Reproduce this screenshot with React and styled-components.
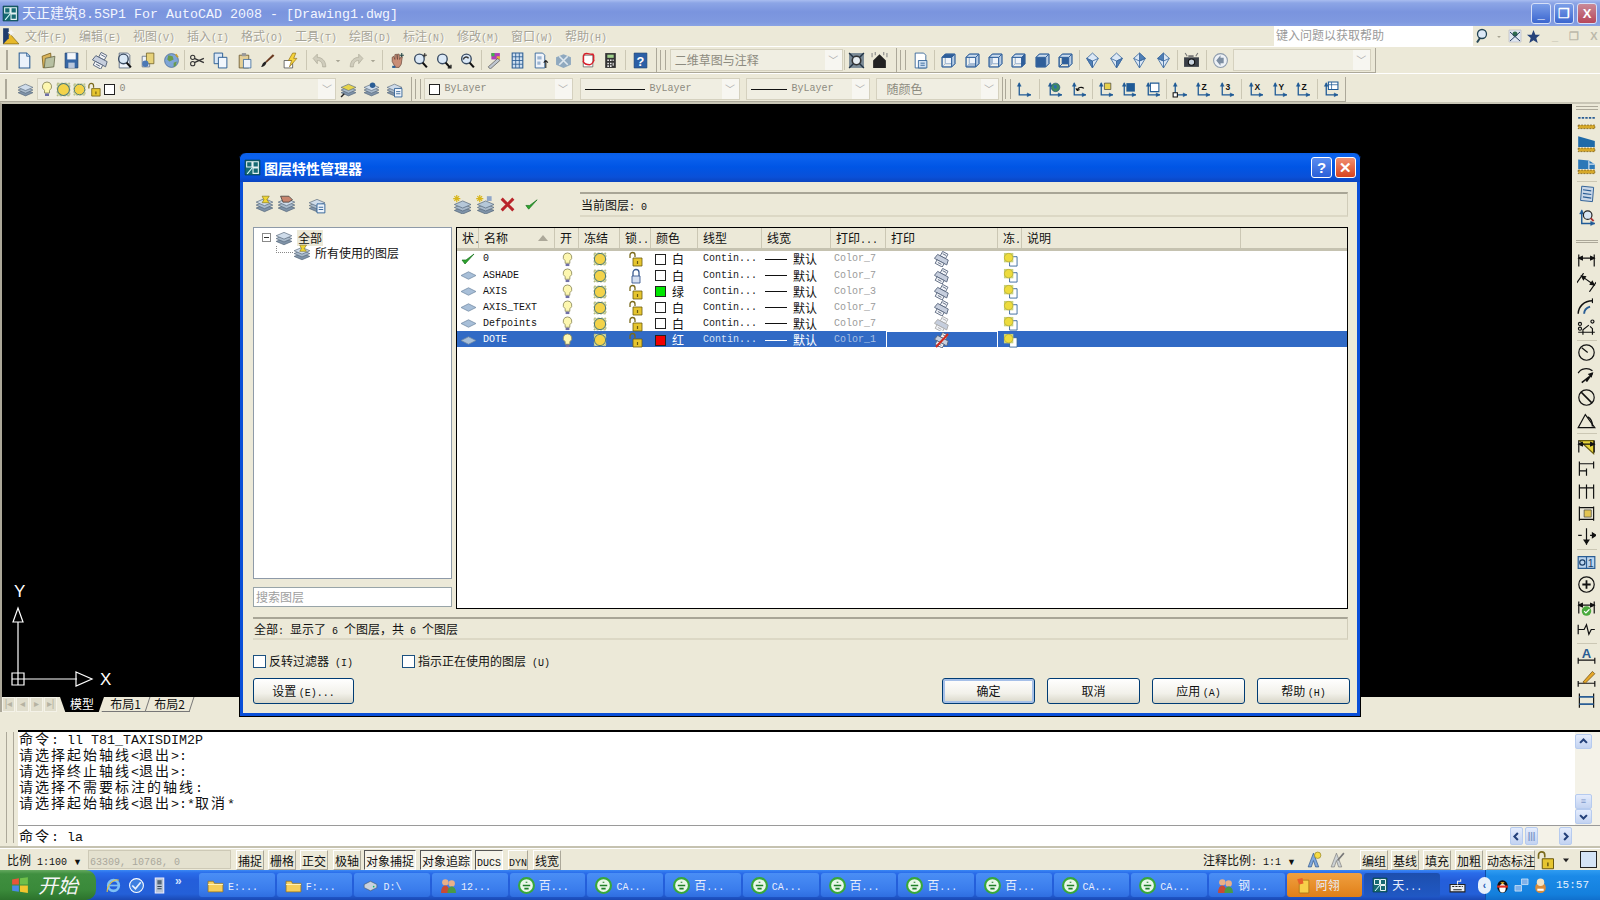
import React from 'react';
import styled, { createGlobalStyle } from 'styled-components';

const cjk = '"Noto Sans CJK SC", "Liberation Sans", sans-serif';
const mono = '"Liberation Mono", "Noto Sans CJK SC", monospace';
const face = '#ece9d8';

const Global = createGlobalStyle`
  html, body { margin: 0; padding: 0; width: 1600px; height: 900px; overflow: hidden; background: ${face}; }
  * { box-sizing: border-box; }
  body { font-family: ${cjk}; font-size: 12px; line-height: 16px; color: #111; }
`;

// ---- little drawings ----
const stack = (top = '#cfdcea') => (
  <>
    <path d="M1 11l7-3 7 3-7 3z" fill="#7f93a8" stroke="#55677a" strokeWidth=".6" />
    <path d="M1 8.5l7-3 7 3-7 3z" fill="#a9bacb" stroke="#55677a" strokeWidth=".6" />
    <path d="M1 6l7-3 7 3-7 3z" fill={top} stroke="#55677a" strokeWidth=".6" />
  </>
);
const cube = (dark) => {
  const fill = (k) => (dark === k ? '#2f5f9a' : 'none');
  return (
    <g stroke="#2f5f9a" strokeWidth=".9" strokeLinejoin="round">
      <path d="M5 2h9v9H5z" fill={dark === 'back' ? '#2f5f9a' : '#e6eef7'} />
      <path d="M2 14l3-3h9l-3 3z" fill={fill('bottom')} />
      <path d="M2 5l3-3v9l-3 3z" fill={fill('left')} />
      <path d="M2 5h9v9H2z" fill={dark === 'front' ? '#2f5f9a' : dark === 'back' ? 'none' : '#f5f8fc'} fillOpacity={dark === 'front' ? 1 : 0.6} />
      <path d="M2 5l3-3h9l-3 3z" fill={dark === 'top' ? '#2f5f9a' : '#cbdcee'} />
      <path d="M11 5l3-3v9l-3 3z" fill={dark === 'right' ? '#2f5f9a' : '#b8cde4'} />
    </g>
  );
};
const iso = (d) => (
  <g stroke="#3d6a9f" strokeWidth=".8" strokeLinejoin="round">
    <path d="M8 1l5.5 5L8 15 2.5 6z" fill="#dce8f5" />
    <path d={d} fill="#4f7fb6" />
    <path d="M2.5 6L8 8.5 13.5 6M8 8.5V15" fill="none" />
  </g>
);
const axes = (
  <g stroke="#1f5a96" strokeWidth="1.2" fill="none">
    <path d="M4 2v11h11" />
    <path d="M2.2 5L4 1.5 5.8 5zM11.5 11.2l3.5 1.8-3.5 1.8z" fill="#1f5a96" strokeWidth=".4" />
  </g>
);
const axesText = (t) => (
  <>
    {axes}
    <text x="7" y="8" fontSize="8" fontWeight="700" fontFamily="Liberation Sans" fill="#111">{t}</text>
  </>
);
const dimBar = (
  <g stroke="#111" strokeWidth="1" fill="none">
    <path d="M1.5 3v10M14.5 3v10M1.5 6h13" />
    <path d="M1.5 6l3-1.5v3zM14.5 6l-3-1.5v3z" fill="#111" />
  </g>
);
const ruler = <path d="M1 11h14v3H1z" fill="#d7a92a" stroke="#6b5210" strokeWidth=".6" strokeDasharray="1.5 1" />;
const printer = (c = '#55637a') => (
  <g stroke={c} strokeWidth=".8" transform="rotate(28 8 8)">
    <path d="M5 1h6v5H5z" fill="#f2f4f8" />
    <path d="M2 6h12l1 5H1z" fill="#c6cedd" />
    <path d="M4 11h8v4H4z" fill="#f2f4f8" />
    <path d="M6 3h4M6 13h4" fill="none" />
  </g>
);
const lockOpen = (
  <>
    <path d="M2 7V4a2.5 2.5 0 0 1 5 0v2" fill="none" stroke="#7b6a1c" strokeWidth="1.3" />
    <path d="M5 7h9v8H5z" fill="#e6c52f" stroke="#6b5a10" strokeWidth=".8" />
    <path d="M9.5 10v3" stroke="#6b5a10" strokeWidth="1.2" />
  </>
);
const bulb = (
  <>
    <path d="M8 1a4.5 4.5 0 0 0-2.5 8.3V12h5V9.3A4.5 4.5 0 0 0 8 1z" fill="#fdf7b0" stroke="#8c8a5c" strokeWidth=".9" />
    <path d="M6 12.5h4v2.5H6z" fill="#6f6fa6" />
  </>
);
const sun = (
  <>
    <path d="M2 2h12v12H2z" fill="#cfd6a0" stroke="#9aa06a" strokeWidth=".6" strokeDasharray="2 1.5" />
    <circle cx="8" cy="8" r="5.6" fill="#f3d34a" stroke="#4d7a7a" strokeWidth="1" />
  </>
);
const folder = (
  <>
    <path d="M1 4h5l1 2h8v8H1z" fill="#f5cf5c" stroke="#8f7020" strokeWidth=".7" />
    <path d="M1 7h14" stroke="#fff2b8" strokeWidth="1" />
  </>
);
const lens = (extra) => (
  <>
    <circle cx="7" cy="6.5" r="4.5" fill="#dbe9f7" stroke="#3a4c63" strokeWidth="1.3" />
    <path d="M10 10l4 4.5" stroke="#111" strokeWidth="2" />
    {extra}
  </>
);

const drawings = {
  folder,
  new: <><path d="M3 1h7l3 3v11H3z" fill="#eaf2fb" stroke="#2a5d94" /><path d="M10 1v3h3" fill="#bcd3ea" stroke="#2a5d94" strokeWidth=".7" /></>,
  open: <><path d="M2 4l8-3 1 10-8 4z" fill="#d9b45c" stroke="#6d5314" strokeWidth=".7" /><path d="M5 6l9-2-1 10-9 1z" fill="#b7c0a2" stroke="#5d5f40" strokeWidth=".7" /></>,
  save: <><path d="M2 1h12v14H2z" fill="#3566a5" stroke="#1e3f70" strokeWidth=".7" /><path d="M4 1h8v6H4z" fill="#f3f6fb" /><path d="M5 10h6v5H5z" fill="#b9c7dc" /></>,
  print: printer(),
  preview: <><path d="M3 1h8l2 2v12H3z" fill="#eef3fa" stroke="#55637a" strokeWidth=".8" />{lens(null)}</>,
  publish: <><path d="M3 4h7v10H3z" fill="#eef3fa" stroke="#55637a" strokeWidth=".7" /><path d="M7 1h7v10H7z" fill="#e7d27a" stroke="#6a5a20" strokeWidth=".7" /><circle cx="6" cy="11" r="3" fill="#4c78b5" /></>,
  globe: <><circle cx="8" cy="8" r="6.5" fill="#7fa5d6" stroke="#4a6b96" strokeWidth=".7" /><path d="M5 3l4 1 1 3-4 2-2-2zM10 10l3-1-1 4-2 1z" fill="#6a9b4e" /><path d="M12 2l2 3" stroke="#c8a030" strokeWidth="1.6" /></>,
  cut: <g stroke="#333" fill="none"><circle cx="3.5" cy="5" r="2" /><circle cx="3.5" cy="11" r="2" /><path d="M5 6l9 4M5 10l9-4" strokeWidth="1.2" /></g>,
  copy: <g stroke="#2a5d94" strokeWidth=".9"><path d="M2 1h8v10H2z" fill="#dbe8f6" /><path d="M6 5h8v10H6z" fill="#f2f7fc" /></g>,
  paste: <><path d="M3 3h9v12H3z" fill="#e5cf96" stroke="#6a5a30" strokeWidth=".8" /><path d="M5.5 1h4v3h-4z" fill="#999" /><path d="M7 7h7v8H7z" fill="#eef3fa" stroke="#2a5d94" strokeWidth=".7" /></>,
  brush: <><path d="M13 2l1.5 1.5L7 10 6 9z" fill="#6a3a20" /><path d="M6 9l1 1c-1 3-3 4-5 4 1-1 1-4 4-5z" fill="#222" /></>,
  match: <><path d="M2 8h8v7H2z" fill="#fff" stroke="#444" strokeWidth=".7" /><path d="M10 1L6 8h3l-2 6 7-8h-3l2-5z" fill="#f5d33d" stroke="#8a6a10" strokeWidth=".6" /></>,
  undo: <path d="M13 14C13 8 9 5 5 5V2L1 6l4 5V8c3 0 5 2 5 6z" fill="#cfccbc" stroke="#a8a594" strokeWidth=".6" />,
  redo: <path d="M3 14C3 8 7 5 11 5V2l4 4-4 5V8c-3 0-5 2-5 6z" fill="#cfccbc" stroke="#a8a594" strokeWidth=".6" />,
  drop: <path d="M5 8h6l-3 3z" fill="#a8a594" />,
  dropDark: <path d="M4 6h8l-4 5z" fill="#222" />,
  pan: <><path d="M3 9V5l1.5-1 1 3V2.500l1.500-.5 1 5V2l1.500 0 .5 5 1.500-3 1 .5-1 7-2 3H6z" fill="#c98d76" stroke="#5f3c2f" strokeWidth=".6" /><path d="M12 1v4M10 3h4" stroke="#244" strokeWidth="1" /><path d="M3 13h3v2H3z" fill="#2a5d94" /></>,
  zoom: lens(<path d="M12 1v4M10 3h4" stroke="#222" strokeWidth=".9" />),
  zoomwin: lens(<path d="M12 15h3v-3" fill="none" stroke="#111" strokeWidth="1.2" />),
  zoomprev: lens(<path d="M4 7c1-3 4-3 5-1" fill="none" stroke="#333" strokeWidth="1.400" />),
  palette: <><path d="M6 1h8v6H6z" fill="#b03cb8" /><path d="M6 1h3v3H6z" fill="#3fb54a" /><path d="M11 4h3v3h-3z" fill="#e2b53a" /><path d="M3 14L12 6l2 2-9 8z" fill="#bfc6d0" stroke="#444" strokeWidth=".6" /></>,
  table: <g fill="#cfdff0" stroke="#2a5d94"><path d="M3 1h10v14H3z" /><path d="M6.300 1v14M9.700 1v14M3 4.500h10M3 8h10M3 11.500h10" fill="none" strokeWidth=".8" /></g>,
  sheet: <><path d="M3 1h7l2 2v12H3z" fill="#f0f4fa" stroke="#2a5d94" strokeWidth=".8" /><path d="M5 4h4v3H5zM5 9h3v3H5z" fill="#9db6d3" /><path d="M13 15V8M11 10l2-2 2 2" fill="none" stroke="#222" /></>,
  tool4: <><path d="M1 5l7-3 7 3v7l-7 3-7-3z" fill="#8fa9bf" /><path d="M4 4l8 8M12 4L4 12" stroke="#dfe8ef" strokeWidth="1.500" /></>,
  markup: <><path d="M4 3h9v11H4z" fill="#fff" stroke="#555" strokeWidth=".7" /><path d="M5 2c3-2 5 1 8 0 2 2 0 4 1 6-1 2-2 4-4 4-3 0-5-1-6-3 1-2-1-4 1-7z" fill="none" stroke="#d81f2a" strokeWidth="1.400" /></>,
  calc: <><path d="M3 1h10v14H3z" fill="#333" /><path d="M5 2.500h6v3H5z" fill="#9fd08a" /><path d="M5 7h1.500v1.500H5zM7.500 7H9v1.500H7.500zM10 7h1v1.500h-1zM5 10h1.500v1.500H5zM7.500 10H9v1.500H7.500zM10 10h1v3h-1zM5 12.500h1.500V14H5zM7.500 12.500H9V14H7.500z" fill="#eee" /></>,
  help: <><path d="M2 1h12v14H2z" fill="#2b5fa6" stroke="#123a70" strokeWidth=".6" /><text x="8" y="13" fontSize="12" fontWeight="700" textAnchor="middle" fontFamily="Liberation Sans" fill="#fff">?</text></>,
  gear: <><path d="M1 1h14v14H1z" fill="#7a8a96" /><circle cx="8" cy="8" r="4" fill="#e6edf2" stroke="#333" strokeWidth="1.500" /><path d="M1 1l4 4M15 1l-4 4M1 15l4-4M15 15l-4-4" stroke="#234" strokeWidth="1.300" /></>,
  house: <><path d="M2 8l6-6 6 6v7H2z" fill="#222" /><path d="M1 1v4M4 0v3M12 0v3M15 1v4" stroke="#888" strokeWidth="1" /></>,
  sheetset: <><path d="M3 1h8l2 2v12H3z" fill="#fff" stroke="#2a5d94" strokeWidth=".8" /><path d="M6 8h8v7H6z" fill="#cfe0f2" stroke="#2a5d94" strokeWidth=".8" /><path d="M8 10.500h4M8 12.500h4" stroke="#2a5d94" strokeWidth=".8" /></>,
  cTop: cube('top'), cBottom: cube('bottom'), cLeft: cube('left'), cRight: cube('right'), cFront: cube('front'), cBack: cube('back'),
  iso1: iso('M2.500 6L8 8.500V15z'), iso2: iso('M13.500 6L8 8.500V15z'), iso3: iso('M8 1l5.500 5L8 8.500z'), iso4: iso('M8 1L2.500 6 8 8.500z'),
  camera: <><path d="M1 5h14v9H1z" fill="#3a3f47" /><path d="M5 3h5v2H5z" fill="#777" /><circle cx="8" cy="9.500" r="3" fill="#c8d3de" stroke="#111" /><path d="M2 1l2 3M14 1l-2 3" stroke="#777" /></>,
  back: <><circle cx="8" cy="8" r="6.500" fill="#edf1f6" stroke="#8d9bab" /><path d="M11 5.500H8V3L4 8l4 5v-2.500h3z" fill="#7d8ea2" /></>,
  layers: stack(),
  layerPrev: <>{stack('#e6d44a')}<path d="M1 15l3-3" stroke="#222" strokeWidth="1.300" /></>,
  layerSet: <>{stack('#cfdcea')}<circle cx="9" cy="4" r="2.600" fill="#2a5d94" /></>,
  layerDoc: <>{stack('#cfdcea')}<path d="M8 7h7v8H8z" fill="#eef4fb" stroke="#2a5d94" strokeWidth=".8" /><path d="M9.500 10h4M9.500 12h4" stroke="#2a5d94" strokeWidth=".8" /></>,
  layerFilter: <>{stack('#cfdcea')}<path d="M6 1h6l-2 3 2 2.500H6l1.500-2.500z" fill="#f0d633" stroke="#7a6a10" strokeWidth=".5" /></>,
  layerHand: <>{stack('#cfdcea')}<path d="M3 1h7l3 3-3 2H5z" fill="#c9866e" stroke="#333" strokeWidth=".6" /></>,
  layerNew: <><g transform="translate(1 2)">{stack('#b5c7d8')}</g><path d="M4 0v6M1 3h6M2 1l4 4M6 1L2 5" stroke="#d8b61c" strokeWidth="1" /></>,
  layerNew2: <><g transform="translate(1 2)">{stack('#b5c7d8')}</g><path d="M4 0v6M1 3h6M2 1l4 4M6 1L2 5" stroke="#d8b61c" strokeWidth="1" /><path d="M10 1h4v4h-4z" fill="#8fa5c8" /></>,
  del: <path d="M2.500 2.500l11 11M13.500 2.500l-11 11" stroke="#b9242a" strokeWidth="2.800" />,
  ok: <path d="M2 9l3 4 9-10-8 6z" fill="#2ea52e" stroke="#14701a" strokeWidth=".7" />,
  plane: <><path d="M1 8l7-3.500L15 8l-7 3.500z" fill="#a8bfd8" stroke="#7088a2" strokeWidth=".7" /></>,
  bulb, sun, lockOpen,
  lockShut: <><path d="M5 8V4.500a3 3 0 0 1 6 0V8" fill="none" stroke="#3a5a90" strokeWidth="1.300" /><path d="M4 8h8v7H4z" fill="#d5dff0" stroke="#3a5a90" strokeWidth=".9" /></>,
  printer: printer(),
  printerOff: printer('#a9a9a9'),
  printerNo: <>{printer()}<path d="M2 15L14 2" stroke="#d22b1e" strokeWidth="2" /></>,
  vpFreeze: <><path d="M7 5h8v10H7z" fill="#fff" stroke="#2a5d94" strokeWidth=".9" /><path d="M1 1h10v10H1z" fill="#c9d27a" /><circle cx="6" cy="6" r="4.500" fill="#eddc3e" stroke="#b5a62a" strokeWidth=".7" /></>,
  ucs: axes,
  ucsWorld: <>{axes}<circle cx="9" cy="6" r="4" fill="#3f8a5f" stroke="#1d4c7c" strokeWidth=".6" /><path d="M7 4h3v3H8z" fill="#2a6bb0" /></>,
  ucsPrev: <>{axes}<path d="M7 9c0-3 4-4 6-2M7 9l-1.500-2M7 9l2-1" fill="none" stroke="#111" strokeWidth="1.100" /></>,
  ucsFace: <>{axes}<path d="M7 2h6v6H7z" fill="#e7d14a" stroke="#333" strokeWidth=".6" /></>,
  ucsObj: <>{axes}<path d="M6 2h8v8H6z" fill="#1f5a96" /></>,
  ucsView: <>{axes}<path d="M6 2h8v8H6z" fill="#fff" stroke="#1f5a96" /></>,
  ucsOrigin: <>{axes}<path d="M2 11h4v4H2z" fill="#fff" stroke="#111" /></>,
  ucsZ: axesText('Z'), ucs3: axesText('3'), ucsRx: axesText('X'), ucsRy: axesText('Y'), ucsRz: axesText('Z'),
  ucsNamed: <>{axes}<path d="M6 1h9v7H6z" fill="#fff" stroke="#1f5a96" /><path d="M6 3.500h9M9 1v7" stroke="#1f5a96" strokeWidth=".7" /></>,
  qd1: <><path d="M1 5h14" stroke="#2a5d94" strokeWidth="1.500" strokeDasharray="2 1" />{ruler}</>,
  qd2: <><path d="M1 1l14 4v5H1z" fill="#1f6aa8" />{ruler}</>,
  qd3: <><path d="M1 2l9 1 5 3v4H1z" fill="#2c78b8" /><path d="M10 3v7M10 6h5" stroke="#cfe2f2" />{ruler}</>,
  notes: <><path d="M4 1l10 1-1 12-10-1z" fill="#c9d7e8" stroke="#2a5d94" strokeWidth=".8" /><path d="M5 4l7 1M5 7l7 1M5 10l7 1" stroke="#2a5d94" /></>,
  ucsLens: <>{axes}<circle cx="9" cy="6" r="3.600" fill="#d8e6f4" stroke="#222" /><path d="M11.500 8.500l2.500 2.500" stroke="#a33" strokeWidth="1.600" /></>,
  dLinear: dimBar,
  dAligned: <g transform="rotate(35 8 8)">{dimBar}</g>,
  dArc: <g stroke="#111" fill="none"><path d="M1 15c0-6 5-11 12-11" strokeWidth="1.200" /><path d="M6 15c0-3 2-5 5-6" stroke="#2a5d94" strokeWidth="1.600" /><path d="M13 2v4" /></g>,
  dOrd: <g stroke="#111" fill="none"><path d="M5 14v-4l5-4M13 14v-5l-2-2M1 12h14" /><circle cx="2.500" cy="5" r="1.300" /><circle cx="13" cy="3" r="1.300" /><circle cx="2.500" cy="9" r="1.300" /></g>,
  dRadius: <g stroke="#111" fill="none"><circle cx="8" cy="8" r="6.500" /><path d="M4 4l5 4" /></g>,
  dJog: <g stroke="#111" fill="none"><path d="M1 6c2-4 8-5 12-2" /><path d="M4 14l5-4-1 3 5-7" strokeWidth="1.300" /><path d="M13 6l-3 1 2 2z" fill="#111" /></g>,
  dDia: <g stroke="#111" fill="none"><circle cx="8" cy="8" r="6.500" /><path d="M3.500 3.500l9 9" strokeWidth="1.300" /></g>,
  dAngle: <g stroke="#111" fill="none"><path d="M1 14h14L7 3z" /><path d="M9 5c2 1 4 4 4 8" strokeWidth="1.200" /></g>,
  dQuick: <><path d="M2 3h12v11z" fill="#e8d43a" stroke="#6a5e10" />{dimBar}</>,
  dBase: <g stroke="#111" fill="none"><path d="M2 2v12M14 2v6M8 8v6M2 4h12M2 10h6" /></g>,
  dCont: <g stroke="#111" fill="none"><path d="M2 2v12M8 2v12M14 2v12M2 5h12" /></g>,
  dSpace: <><g stroke="#111" fill="none"><path d="M2 2v12M14 2v12M2 3h12M2 13h12" /></g><path d="M6 5h6v6H6z" fill="#e3c552" stroke="#444" strokeWidth=".6" /></>,
  dBreak: <g stroke="#111" fill="none"><path d="M8 1v14M1 7h3M11 7h4" /><path d="M8 14l-2-3h4zM13 5l3 2-3 2z" fill="#111" /></g>,
  dTol: <><path d="M1 3h14v10H1z" fill="#bcd5ee" stroke="#2a5d94" /><path d="M8 3v10" stroke="#2a5d94" /><circle cx="4.500" cy="8" r="2.200" fill="none" stroke="#1c3f68" /><text x="11.500" y="11.500" fontSize="9" textAnchor="middle" fontFamily="Liberation Sans" fill="#1c3f68">1</text></>,
  dCenter: <g stroke="#111" fill="none"><circle cx="8" cy="8" r="6.500" /><path d="M8 4.500v7M4.500 8h7" strokeWidth="1.500" /></g>,
  dInspect: <>{dimBar}<circle cx="8" cy="11" r="4" fill="#4aaa3c" /><path d="M6 11l1.500 1.500L10.500 9.500" stroke="#fff" fill="none" /></>,
  dZig: <g stroke="#111" fill="none"><path d="M1 4v8M1 8h5l2-4 2 8 2-4h3" /></g>,
  dText: <><text x="8" y="9.500" fontSize="11" fontWeight="700" textAnchor="middle" fontFamily="Liberation Sans" fill="#2a5d94">A</text><path d="M1 11h14M1 9v5M15 9v5" stroke="#111" /></>,
  dEdit: <><path d="M1 12h14M1 10v5M15 10v5" stroke="#111" /><path d="M5 11L13 2l2 2-8 8z" fill="#e6a82a" stroke="#6b4a10" strokeWidth=".6" /></>,
  dUpdate: <g stroke="#111" fill="none"><path d="M2 2v12M14 2v12" /><path d="M2 5h12M2 11h12" stroke="#2a5d94" strokeWidth="1.500" /></g>,
  ieE: <><circle cx="8" cy="8" r="5" fill="none" stroke="#7fc0f5" strokeWidth="2.500" /><path d="M3 8h10" stroke="#7fc0f5" strokeWidth="1.600" /><path d="M13 3C9 1 2 7 2 14" fill="none" stroke="#e9c441" /></>,
  desktop: <><circle cx="8" cy="8" r="6.500" fill="#3d7fe0" stroke="#fff" /><path d="M4 8l3 3 5-6" fill="none" stroke="#e8f1ff" strokeWidth="1.600" /></>,
  device: <><path d="M4 1h8v14H4z" fill="#b8c4d4" stroke="#eef" /><path d="M6 3h4v4H6z" fill="#567" /><path d="M6 9h4M6 11h4" stroke="#345" /></>,
  ball: <><circle cx="8" cy="8" r="7" fill="#eaf7e9" stroke="#38a83a" strokeWidth="2" /><path d="M4.500 8h7M8 4.500v1M6 11h4" stroke="#1f7f28" strokeWidth="1.600" /></>,
  drive: <><path d="M2 7l6-3 6 3v3l-6 3-6-3z" fill="#c9d2de" stroke="#44566a" strokeWidth=".6" /><circle cx="11" cy="9" r=".8" fill="#1b6" /></>,
  people: <><circle cx="5" cy="5" r="3" fill="#e9b089" /><path d="M1 15c0-5 2-7 4-7s4 2 4 7z" fill="#c94a35" /><circle cx="11" cy="6" r="3" fill="#e9b089" /><path d="M7 15c0-4 2-6 4-6s4 2 4 6z" fill="#4a9a45" /></>,
  note: <><path d="M4 3h9v12H4z" fill="#f8cf4a" stroke="#9a6a10" strokeWidth=".6" /><path d="M2 2l5-1 1 5-4 1z" fill="#e85f2a" /></>,
  keyboard: <><path d="M1 7h14v7H1z" fill="#eef1f5" stroke="#222" /><path d="M3 9h2M6 9h2M9 9h2M12 9h1M4 12h8" stroke="#222" /><path d="M8 7V4h3V2" fill="none" stroke="#eee" /></>,
  tux: <><ellipse cx="8" cy="9" rx="5" ry="6" fill="#111" /><ellipse cx="8" cy="10.500" rx="3" ry="4" fill="#fff" /><path d="M3 8h10v2H3z" fill="#e42d20" /><path d="M6 5h4l-2 2z" fill="#f6c02c" /></>,
  net: <><path d="M8 1h7v6H8z" fill="#7fb1ea" stroke="#fff" strokeWidth=".6" /><path d="M1 8h7v6H1z" fill="#7fb1ea" stroke="#fff" strokeWidth=".6" /></>,
  duck: <><ellipse cx="8" cy="10" rx="5" ry="5" fill="#d98c3a" /><circle cx="8" cy="5" r="3.500" fill="#f2e2c4" /><path d="M5 12h6" stroke="#fff" strokeWidth="2" /></>,
  search: <><circle cx="7" cy="6" r="4.500" fill="#dce9f7" stroke="#245" strokeWidth="1.300" /><path d="M5 10l-3 4.500" stroke="#245" strokeWidth="2" /></>,
  comm: <><path d="M2 2h12v12H2z" fill="#dfe6ef" stroke="#aab" strokeWidth=".5" /><circle cx="8" cy="6" r="2.500" fill="#2f6b4f" /><path d="M3 13l10-9M3 4l10 9" stroke="#2a3f63" /></>,
  star: <path d="M8 1l2 5h5l-4 3.500 1.500 5.500L8 12l-4.500 3L5 9.500 1 6h5z" fill="#27437a" />,
  apex: <><path d="M1 1h14v14H1z" fill="#166a72" stroke="#083b40" strokeWidth=".6" /><path d="M2.500 2.500h5v5h-5zM8.500 8.500h5v5h-5zM8.500 2.500h5v5h-5z" fill="none" stroke="#e6f2f2" /><path d="M3 14l5-6" stroke="#dff" /></>,
  menuIcon: <><path d="M1 15L7 6l8 9z" fill="#e7b92a" stroke="#7a5f10" strokeWidth=".6" /><path d="M1 15V1h5v9z" fill="#1e3b6d" /><path d="M8 2l1 2 2 1-2 1-1 2-1-2-2-1 2-1z" fill="#f4f4f4" /></>,
  annotA: <><path d="M2 15L7 2l5 13H9l-2-6-2 6z" fill="#7ea6dc" stroke="#264e85" strokeWidth=".6" /><circle cx="11" cy="4" r="3" fill="#f6dc45" stroke="#8a7a20" strokeWidth=".6" /></>,
  annotB: <><path d="M2 15L7 2l5 13H9l-2-6-2 6z" fill="#cdd2d4" stroke="#777" strokeWidth=".6" /><path d="M8 9l6-7" stroke="#777" strokeWidth="1.500" /></>,
};

const Ico = ({ n, size = 17 }) => (
  <svg width={size} height={size} viewBox="0 0 16 16" style={{ display: 'block', flex: 'none' }}>
    {drawings[n]}
  </svg>
);

const Chev = ({ d }) => {
  const points = { up: '3,10 8,5 13,10', down: '3,6 8,11 13,6', left: '10,3 5,8 10,13', right: '6,3 11,8 6,13' };
  return (
    <svg width="11" height="11" viewBox="0 0 16 16" style={{ display: 'block', margin: 'auto' }}>
      <polyline points={points[d]} fill="none" stroke="#23407a" strokeWidth="3" />
    </svg>
  );
};

// ---- main window chrome ----
const Page = styled.div`
  position: relative;
  width: 1600px;
  height: 900px;
  display: flex;
  flex-direction: column;
  background: ${face};
  overflow: hidden;
`;
const Lat = styled.span`
  font-family: ${mono};
  font-size: ${(p) => p.$size || 10}px;
  line-height: 1;
  letter-spacing: 0;
`;
// runs of latin text get the half-width font, chinese stays as it is
const Mixed = ({ text, size }) =>
  text.split(/([\u4e00-\u9fff，]+)/).map((part, i) =>
    i % 2 ? part : part && <Lat key={i} $size={size}>{part}</Lat>
  );
const TitleBar = styled.div`
  height: 26px;
  flex: none;
  display: flex;
  align-items: center;
  padding: 0 0 0 2px;
  color: #f2f5ff;
  background: linear-gradient(#a9bdf0 0, #8ca5e6 3px, #7a94de 12px, #7f99e0 22px, #8aa3e4 100%);
`;
const TitleText = styled.div`
  margin-left: 3px;
  font-size: 14px;
  white-space: nowrap;
`;
const WinBtns = styled.div`
  margin-left: auto;
  display: flex;
  gap: 3px;
  padding-right: 3px;
`;
const WinBtn = styled.div`
  width: 20px;
  height: 21px;
  border: 1px solid #d6e0f8;
  border-radius: 3px;
  color: #fff;
  font: 700 13px/19px "Liberation Sans", sans-serif;
  text-align: center;
  background: ${(p) => (p.$red ? 'linear-gradient(#c98a98, #b7475a)' : 'linear-gradient(#7b9ee8, #3b66cf)')};
`;
const MenuBar = styled.div`
  height: 20px;
  flex: none;
  display: flex;
  align-items: center;
  padding-left: 2px;
`;
const MenuItem = styled.div`
  width: 54px;
  font-size: 12px;
  color: #a5a397;
  text-shadow: 1px 1px 0 #fff;
  white-space: nowrap;
`;
const MenuList = styled.div`
  display: flex;
  margin-left: 5px;
`;
const HelpBox = styled.div`
  margin-left: auto;
  width: 199px;
  height: 20px;
  background: #fff;
  padding: 1px 2px;
  color: #9a9a9a;
`;
const HelpTools = styled.div`
  display: flex;
  align-items: center;
  padding-left: 2px;
  width: 127px;
  height: 20px;
  & > * { margin-right: 3px; }
`;
const Dim3 = styled.span`
  color: #bcb9aa;
  font: 700 11px/16px "Liberation Sans", sans-serif;
  margin-left: ${(p) => p.$ml || 8}px;
`;
const ToolRow = styled.div`
  height: ${(p) => p.$h}px;
  flex: none;
  display: flex;
  align-items: stretch;
  padding-top: ${(p) => p.$pt}px;
  border-top: 1px solid #fff;
`;
const Strip = styled.div`
  display: flex;
  align-items: center;
  padding: ${(p) => p.$pad || '0 4px 0 0'};
  border-right: 1px solid #aca899;
  border-bottom: 1px solid #aca899;
`;
const Grip = styled.div`
  flex: none;
  width: ${(p) => p.$w || 6}px;
  margin: ${(p) => p.$m || '0'};
  height: 20px;
  border-left: 1px solid #aca899;
  border-right: 1px solid #aca899;
`;
const ToolBtn = styled.div`
  flex: none;
  width: ${(p) => (p.$small ? 12 : 23.4)}px;
  height: 22px;
  display: flex;
  align-items: center;
  justify-content: center;
`;
const Sep = styled.div`
  flex: none;
  width: ${(p) => p.$w}px;
  height: 20px;
  position: relative;
  &::after {
    content: '';
    position: absolute;
    left: 50%;
    top: 0;
    bottom: 0;
    border-left: 1px solid #cbc7b4;
  }
`;
const Combo = styled.div`
  flex: none;
  width: ${(p) => p.$w}px;
  height: 22px;
  margin: ${(p) => p.$m || '0'};
  display: flex;
  align-items: center;
  gap: ${(p) => p.$gap ?? 5}px;
  padding-left: ${(p) => p.$pl ?? 4}px;
  background: #f0eee2;
  border: 1px solid #d5d1bf;
  color: #8d8b80;
  overflow: hidden;
`;
const ComboArrow = styled.div`
  margin-left: auto;
  flex: none;
  width: 17px;
  height: 20px;
  background: #f7f6f1;
  color: #aaa;
  font: 10px/20px "Liberation Sans", sans-serif;
  text-align: center;
  &::before { content: '﹀'; font-family: ${cjk}; }
`;
const LineSample = styled.div`
  flex: none;
  width: ${(p) => p.$w}px;
  border-top: 1px solid ${(p) => p.$c || '#111'};
`;
const Swatch = styled.div`
  flex: none;
  width: ${(p) => p.$s || 10}px;
  height: ${(p) => p.$s || 10}px;
  background: ${(p) => p.$c || '#fff'};
  border: 1px solid #222;
`;

const Tools = ({ items }) =>
  items.map((it, i) =>
    typeof it === 'number' ? (
      <Sep key={i} $w={it} />
    ) : (
      <ToolBtn key={i} $small={it === 'drop'}>
        <Ico n={it} size={it === 'drop' ? 12 : 17} />
      </ToolBtn>
    )
  );

// ---- work area ----
const Work = styled.div`
  height: 610px;
  flex: none;
  display: flex;
  background: ${face};
  border-top: 2px solid #c9c6b6;
  border-left: 2px solid #aca899;
`;
const CanvasCol = styled.div`
  flex: 1;
  display: flex;
  flex-direction: column;
  min-width: 0;
`;
const Canvas = styled.div`
  flex: 1;
  background: #000;
  display: flex;
  align-items: flex-end;
  padding: 0 0 8px 6px;
`;
const Tabs = styled.div`
  height: 15px;
  flex: none;
  display: flex;
  align-items: stretch;
`;
const TabNav = styled.div`
  width: 58px;
  display: flex;
  align-items: stretch;
  gap: 1px;
`;
const TabNavBtn = styled.div`
  width: 13px;
  background: #e0ddcc;
  border: 1px solid #f4f2e8;
  color: #b5b2a2;
  font: 10px/12px "Liberation Sans", sans-serif;
  text-align: center;
`;
const Tab = styled.div`
  width: ${(p) => p.$w}px;
  text-align: center;
  line-height: 14px;
  color: ${(p) => (p.$on ? '#fff' : '#111')};
  background: ${(p) => (p.$on ? '#000' : 'transparent')};
  clip-path: polygon(0 0, 100% 0, 88% 100%, 12% 100%);
  border-right: ${(p) => (p.$on ? 'none' : '1px solid #777')};
  transform: ${(p) => (p.$on ? 'none' : 'skewX(-18deg)')};
  ${(p) => (p.$on ? '' : 'clip-path: none; border-bottom: 1px solid #777;')}
`;
const TabLabel = styled.div`
  transform: ${(p) => (p.$on ? 'none' : 'skewX(18deg)')};
`;
const SideBar = styled.div`
  width: 28px;
  flex: none;
  display: flex;
  flex-direction: column;
  align-items: center;
  padding: 2px 0 0 1px;
`;
const SideGrip = styled.div`
  width: 22px;
  height: 5px;
  margin: ${(p) => p.$m || '0 0 1px'};
  border-top: 1px solid #aca899;
  border-bottom: 1px solid #aca899;
`;
const SideBtn = styled.div`
  flex: none;
  height: 22.4px;
  display: flex;
  align-items: center;
`;
const SideSep = styled.div`
  flex: none;
  width: 20px;
  height: ${(p) => p.$h || 4}px;
  position: relative;
  &::after {
    content: '';
    position: absolute;
    left: 0;
    right: 0;
    top: 50%;
    border-top: 1px solid #cbc7b4;
  }
`;

// ---- layer dialog ----
const Dialog = styled.div`
  position: absolute;
  left: 239px;
  top: 153px;
  width: 1122px;
  height: 564px;
  display: flex;
  flex-direction: column;
  border-radius: 6px 6px 0 0;
  background: #0a4fd8;
  padding: 0 4px 4px;
  box-shadow: 0 0 0 1px #000 inset;
`;
const DlgTitle = styled.div`
  height: 29px;
  flex: none;
  margin: 0 -3px;
  padding: 0 4px;
  display: flex;
  align-items: center;
  gap: 3px;
  border-radius: 6px 6px 0 0;
  color: #fff;
  font-size: 14px;
  font-weight: 700;
  background: linear-gradient(#0a5fe6 0, #0b62ee 4px, #0055e5 14px, #0a50d8 24px, #0a44c0 100%);
`;
const DlgBtns = styled.div`
  margin-left: auto;
  display: flex;
  gap: 3px;
`;
const DlgBtn = styled.div`
  width: 21px;
  height: 21px;
  border: 1px solid #fff;
  border-radius: 3px;
  color: #fff;
  font: 700 15px/19px "Liberation Sans", sans-serif;
  text-align: center;
  background: ${(p) => (p.$red ? 'linear-gradient(#f08f70, #d9431f)' : 'linear-gradient(#5b8df0, #2a5fd8)')};
`;
const DlgBody = styled.div`
  flex: 1;
  background: ${face};
  padding: 10px 9px 0 10px;
  display: flex;
  flex-direction: column;
`;
const DlgTop = styled.div`
  height: 25px;
  flex: none;
  display: flex;
  align-items: center;
`;
const DlgTool = styled.div`
  flex: none;
  width: ${(p) => p.$w || 22}px;
  margin-left: ${(p) => p.$ml || 0}px;
  display: flex;
  justify-content: center;
`;
const InfoBar = styled.div`
  flex: ${(p) => (p.$grow ? 1 : 'none')};
  height: ${(p) => p.$h}px;
  margin: ${(p) => p.$m || '0'};
  display: flex;
  align-items: center;
  padding: 0 0 0 ${(p) => p.$pl || 1}px;
  border-top: 2px solid #a8a596;
  border-bottom: 2px solid #dcd8c5;
  border-right: 1px solid #d0ccb9;
  white-space: pre;
`;
const DlgMain = styled.div`
  height: 382px;
  margin-top: 10px;
  flex: none;
  display: flex;
  gap: 4px;
`;
const LeftCol = styled.div`
  width: 199px;
  flex: none;
  display: flex;
  flex-direction: column;
  gap: 8px;
  padding-bottom: 2px;
`;
const Tree = styled.div`
  flex: 1;
  background: #fff;
  border: 1px solid #8e9aa8;
  padding: 2px 0 0 8px;
`;
const TreeRow = styled.div`
  height: 15px;
  display: flex;
  align-items: center;
  gap: ${(p) => p.$gap ?? 4}px;
  margin-left: ${(p) => p.$ml || 0}px;
`;
const Expander = styled.div`
  width: 9px;
  height: 9px;
  border: 1px solid #8a8a8a;
  position: relative;
  &::after {
    content: '';
    position: absolute;
    left: 1px;
    right: 1px;
    top: 3px;
    border-top: 1px solid #333;
  }
`;
const TreeLabel = styled.span`
  background: ${(p) => (p.$sel ? face : 'transparent')};
  padding: 0 1px;
  margin-left: ${(p) => p.$ml || 0}px;
`;
const TreeDots = styled.div`
  width: 17px;
  height: 7px;
  margin-top: -6px;
  border-left: 1px dotted #888;
  border-bottom: 1px dotted #888;
`;
const SearchBox = styled.div`
  height: 20px;
  flex: none;
  background: #fff;
  border: 1px solid #98a4a8;
  padding: 1px 2px;
  color: #9e9e9e;
`;
const Table = styled.div`
  flex: 1;
  background: #fff;
  border: 1px solid #000;
  border-top-width: 1px;
  min-width: 0;
`;
const cols = '22px 76px 24px 41px 31px 47px 64px 69px 55px 112px 24px 219px 1fr';
const HeadRow = styled.div`
  display: grid;
  grid-template-columns: ${cols};
  height: 23px;
  background: ${face};
  border-bottom: 3px solid #c5c2b0;
`;
const HeadCell = styled.div`
  display: flex;
  align-items: center;
  justify-content: space-between;
  padding: 0 6px 1px 5px;
  white-space: nowrap;
  overflow: hidden;
  border-right: 1px solid #cbc7b4;
  &:last-child { border-right: none; }
`;
const SortMark = styled.span`
  width: 0;
  height: 0;
  border-left: 5px solid transparent;
  border-right: 5px solid transparent;
  border-bottom: 6px solid #aca899;
`;
const Row = styled.div`
  display: grid;
  grid-template-columns: ${cols};
  height: 16px;
  background: ${(p) => (p.$sel ? '#316ac5' : 'transparent')};
  color: ${(p) => (p.$sel ? '#fff' : '#111')};
`;
const Cell = styled.div`
  display: flex;
  align-items: center;
  justify-content: ${(p) => (p.$center ? 'center' : 'flex-start')};
  gap: ${(p) => p.$gap || 0}px;
  padding-left: ${(p) => p.$pl || 0}px;
  white-space: nowrap;
  overflow: visible;
  ${(p) => (p.$box ? 'border: 1px solid #fff;' : '')}
  color: ${(p) => p.$c || 'inherit'};
`;
const Checks = styled.div`
  display: flex;
  margin-top: 13px;
  height: 16px;
  flex: none;
`;
const CheckLabel = styled.label`
  width: ${(p) => p.$w}px;
  flex: none;
  display: flex;
  align-items: center;
  gap: 3px;
  white-space: pre;
`;
const CheckBox = styled.div`
  width: 13px;
  height: 13px;
  background: #fff;
  border: 1px solid #1c5180;
`;
const Actions = styled.div`
  display: flex;
  align-items: flex-start;
  margin-top: 9px;
  gap: 12px;
`;
const Btn = styled.div`
  flex: none;
  width: ${(p) => p.$w || 93}px;
  height: 26px;
  margin-left: ${(p) => p.$ml || 0}px;
  border: 1px solid #003c74;
  border-radius: 3px;
  background: linear-gradient(#fff, #f2f1ea 60%, #d8d6c8);
  text-align: center;
  line-height: 24px;
  ${(p) => (p.$def ? 'box-shadow: inset 0 0 0 2px #a6c0e8;' : '')}
`;

// ---- command window ----
const Command = styled.div`
  height: 118px;
  flex: none;
  margin-top: 18px;
  display: flex;
  padding-left: 6px;
  padding-bottom: 3px;
  border-bottom: 2px solid #c5c2b0;
`;
const CmdGrip = styled.div`
  width: 8px;
  margin-right: 4px;
  border-left: 1px solid #aca899;
  border-right: 1px solid #aca899;
  margin-top: 2px;
`;
const CmdWin = styled.div`
  flex: 1;
  display: flex;
  flex-direction: column;
  border-top: 2px solid #000;
  min-width: 0;
`;
const CmdHist = styled.div`
  height: 93px;
  flex: none;
  background: #fff;
  display: flex;
  font-size: 14px;
  letter-spacing: 2px;
`;
const CmdLines = styled.div`
  flex: 1;
  padding: 0 0 0 1px;
  margin-top: -2px;
`;
const CmdLine = styled.div`
  height: 16px;
  line-height: 16px;
  white-space: pre;
`;
const CmdInput = styled.div`
  height: 21px;
  flex: none;
  background: #fff;
  border-top: 1px solid #9a9a9a;
  display: flex;
  align-items: center;
  padding-left: 1px;
  font-size: 14px;
  letter-spacing: 2px;
  white-space: pre;
`;
const VScroll = styled.div`
  width: 25px;
  flex: none;
  display: flex;
  flex-direction: column;
  padding: 2px 8px 0 0;
  background: #f4f2e8;
  letter-spacing: 0;
`;
const ScrollBtn = styled.div`
  flex: none;
  display: flex;
  align-items: center;
  width: ${(p) => p.$w || 17}px;
  height: ${(p) => p.$h || 15}px;
  margin: ${(p) => p.$m || '0'};
  border: 1px solid #b6cbef;
  border-radius: 2px;
  background: linear-gradient(#e4ecfd, #c3d3f1);
  color: #7d97c8;
  font: 700 9px/13px "Liberation Sans", sans-serif;
  letter-spacing: 0;
  text-align: center;
  justify-content: center;
`;
const HScroll = styled.div`
  margin-left: auto;
  width: 90px;
  height: 20px;
  flex: none;
  display: flex;
  align-items: center;
  padding-right: 28px;
  background: #f4f2e8;
`;

// ---- status + taskbar ----
const Status = styled.div`
  height: 22px;
  flex: none;
  display: flex;
  align-items: center;
  padding-left: 7px;
  border-top: 1px solid #fff;
`;
const ScaleText = styled.div`
  width: 81px;
  flex: none;
  white-space: pre;
`;
const SmallArrow = styled.span`
  font: 9px/1 "Liberation Sans", sans-serif;
`;
const Coords = styled.div`
  width: 143px;
  height: 19px;
  flex: none;
  margin-right: 5px;
  background: #e4e1cf;
  border: 1px solid #cdc9b6;
  color: #aaa89c;
  padding-left: 1px;
  line-height: 17px;
`;
const StatusBtn = styled.div`
  flex: none;
  width: ${(p) => p.$w}px;
  margin-right: ${(p) => p.$mr || 4}px;
  height: 20px;
  line-height: 19px;
  text-align: center;
  white-space: nowrap;
  ${(p) =>
    p.$on
      ? 'border-top: 1px solid #555; border-left: 1px solid #555; border-right: 1px solid #fff; border-bottom: 1px solid #fff; background: #f5f3ea;'
      : 'border-right: 1px solid #aca899; border-bottom: 1px solid #aca899; border-top: 1px solid #fff; border-left: 1px solid #fff;'}
`;
const StatusRight = styled.div`
  margin-left: auto;
  display: flex;
  align-items: center;
`;
const StatusText = styled.div`
  white-space: pre;
  margin-right: ${(p) => p.$mr || 0}px;
`;
const Spacer = styled.div`
  flex: none;
  width: ${(p) => p.$w}px;
`;
const Task = styled.div`
  height: 30px;
  flex: none;
  display: flex;
  align-items: stretch;
  background: linear-gradient(#3a88f4 0, #2a6cea 3px, #245edb 10px, #2460d8 24px, #1a49b4 100%);
  color: #e8eefc;
`;
const Start = styled.div`
  width: 96px;
  flex: none;
  display: flex;
  align-items: center;
  gap: 9px;
  padding-left: 11px;
  border-radius: 0 10px 10px 0;
  background: linear-gradient(#64a95f 0, #3f8f3f 4px, #3a8a3a 20px, #2c722c 100%);
  color: #f6f6f6;
  font-size: 20px;
  font-style: italic;
`;
const Quick = styled.div`
  width: 103px;
  flex: none;
  display: flex;
  align-items: center;
  padding-left: 9px;
  gap: 6px;
`;
const Chevrons = styled.span`
  font: 700 12px/12px "Liberation Sans", sans-serif;
  color: #cfe0ff;
  margin: -8px 0 0 1px;
`;
const TaskBtns = styled.div`
  display: flex;
  gap: 2px;
  align-items: center;
`;
const TaskBtn = styled.div`
  width: 75.7px;
  height: 24px;
  flex: none;
  display: flex;
  align-items: center;
  gap: 4px;
  padding-left: 8px;
  border-radius: 3px;
  white-space: nowrap;
  background: ${(p) =>
    p.$tone === 'orange'
      ? 'linear-gradient(#f0a040, #e07f18)'
      : p.$tone === 'active'
      ? 'linear-gradient(#1d4fae, #2058c4)'
      : 'linear-gradient(#4a8ef5, #3a7cec 70%, #2f6ee0)'};
`;
const TrayKey = styled.div`
  margin-left: 9px;
  width: 36px;
  flex: none;
  display: flex;
  align-items: center;
`;
const Tray = styled.div`
  flex: 1;
  display: flex;
  align-items: center;
  gap: 3px;
  padding-left: 0;
  background: linear-gradient(#2f9cf2 0, #1b8ae8 6px, #1480dd 24px, #106fcc 100%);
  border-left: 1px solid #0f4fa8;
`;
const TrayBack = styled.div`
  width: 13px;
  height: 17px;
  margin-left: -8px;
  border-radius: 8px;
  background: #e6f0fb;
  color: #1c5ab5;
  font: 700 10px/17px "Liberation Sans", sans-serif;
  text-align: center;
`;
const Clock = styled.span`
  margin-left: 4px;
  font: 11px/1 "Liberation Mono", monospace;
  color: #e4f0fc;
`;

const layerRows = [
  { name: '0', st: 'ok', lock: 'lockOpen', c: '#fff', cn: '白', pl: 'Color_7', pr: 'printer' },
  { name: 'ASHADE', st: 'plane', lock: 'lockShut', c: '#fff', cn: '白', pl: 'Color_7', pr: 'printer' },
  { name: 'AXIS', st: 'plane', lock: 'lockOpen', c: '#00e600', cn: '绿', pl: 'Color_3', pr: 'printer' },
  { name: 'AXIS_TEXT', st: 'plane', lock: 'lockOpen', c: '#fff', cn: '白', pl: 'Color_7', pr: 'printer' },
  { name: 'Defpoints', st: 'plane', lock: 'lockOpen', c: '#fff', cn: '白', pl: 'Color_7', pr: 'printerOff' },
  { name: 'DOTE', st: 'plane', lock: 'lockOpen', c: '#f00000', cn: '红', pl: 'Color_1', pr: 'printerNo', sel: true },
];
const heads = ['状.', '名称', '开', '冻结', '锁..', '颜色', '线型', '线宽', '打印...', '打印', '冻.', '说明', ''];
const menus = [['文件', 'F'], ['编辑', 'E'], ['视图', 'V'], ['插入', 'I'], ['格式', 'O'], ['工具', 'T'], ['绘图', 'D'], ['标注', 'N'], ['修改', 'M'], ['窗口', 'W'], ['帮助', 'H']];
const sideTools = [
  'qd1', 'qd2', 'qd3', 6, 'notes', 'ucsLens', 14,
  'dLinear', 'dAligned', 'dArc', 'dOrd', 3,
  'dRadius', 'dJog', 'dDia', 'dAngle', 4,
  'dQuick', 'dBase', 'dCont', 'dSpace', 'dBreak', 4,
  'dTol', 'dCenter', 'dInspect', 'dZig', 4,
  'dText', 'dEdit', 'dUpdate',
];
const tasks = [
  ['folder', 'E:...'], ['folder', 'F:...'], ['drive', 'D:\\'], ['people', '12...'],
  ['ball', '百...'], ['ball', 'CA...'], ['ball', '百...'], ['ball', 'CA...'],
  ['ball', '百...'], ['ball', '百...'], ['ball', '百...'], ['ball', 'CA...'], ['ball', 'CA...'],
  ['people', '钢...'], ['note', '阿翎', 'orange'], ['apex', '天...', 'active'],
];
const history = [
  '命令: ll T81_TAXISDIM2P',
  '请选择起始轴线<退出>:',
  '请选择终止轴线<退出>:',
  '请选择不需要标注的轴线:',
  '请选择起始轴线<退出>:*取消*',
];

export default function App() {
  return (
    <Page>
      <Global />
      <TitleBar>
        <Ico n="apex" />
        <TitleText>天正建筑<Lat $size={13.33}>8.5SP1 For AutoCAD 2008 - [Drawing1.dwg]</Lat></TitleText>
        <WinBtns>
          <WinBtn>_</WinBtn>
          <WinBtn>❐</WinBtn>
          <WinBtn $red>X</WinBtn>
        </WinBtns>
      </TitleBar>
      <MenuBar>
        <Ico n="menuIcon" size={18} />
        <MenuList>
          {menus.map(([t, k]) => (
            <MenuItem key={k}>{t}<Lat>({k})</Lat></MenuItem>
          ))}
        </MenuList>
        <HelpBox>键入问题以获取帮助</HelpBox>
        <HelpTools>
          <Ico n="search" size={16} />
          <Ico n="drop" size={10} />
          <Ico n="comm" size={16} />
          <Ico n="star" size={15} />
          <Dim3 $ml={8}>_</Dim3>
          <Dim3>❐</Dim3>
          <Dim3>X</Dim3>
        </HelpTools>
      </MenuBar>
      <ToolRow $h={27} $pt={1}>
        <Strip>
          <Grip $m="0 5px 0 6px" $w={1} />
          <Tools items={['new', 'open', 'save', 6, 'print', 'preview', 'publish', 'globe', 3, 'cut', 'copy', 'paste', 'brush', 'match', 6, 'undo', 'drop', 'redo', 'drop', 6, 'pan', 'zoom', 'zoomwin', 'zoomprev', 3, 'palette', 'table', 'sheet', 'tool4', 'markup', 'calc', 6, 'help']} />
        </Strip>
        <Strip>
          <Grip $m="0 4px 0 3px" />
          <Combo $w={173}>
            <span>二维草图与注释</span>
            <ComboArrow />
          </Combo>
          <Sep $w={2} />
          <Tools items={['gear', 'house']} />
        </Strip>
        <Strip>
          <Grip $m="0 3px 0 3px" />
          <Tools items={['sheetset', 5, 'cTop', 'cBottom', 'cLeft', 'cRight', 'cFront', 'cBack', 4, 'iso1', 'iso2', 'iso3', 'iso4', 5, 'camera', 6, 'back']} />
          <Combo $w={138}><ComboArrow /></Combo>
        </Strip>
      </ToolRow>
      <ToolRow $h={29} $pt={3}>
        <Strip>
          <Grip $m="0 3px 0 5px" $w={1} />
          <Spacer $w={4} />
          <Tools items={['layers']} />
          <Combo $w={299} $gap={0} $pl={1}>
            <Ico n="bulb" size={16} />
            <Ico n="sun" size={17} />
            <Ico n="sun" size={15} />
            <Ico n="lockOpen" size={15} />
            <Spacer $w={2} />
            <Swatch $s={11} />
            <Lat style={{ marginLeft: 4 }}>0</Lat>
            <ComboArrow />
          </Combo>
          <Tools items={['layerPrev', 'layerSet', 'layerDoc']} />
        </Strip>
        <Strip $pad="0 3px 0 0">
          <Grip $m="0 3px 0 3px" />
          <Combo $w={149}>
            <Swatch $s={11} />
            <Lat>ByLayer</Lat>
            <ComboArrow />
          </Combo>
          <Combo $w={160} $m="0 0 0 7px">
            <LineSample $w={60} />
            <Lat>ByLayer</Lat>
            <ComboArrow />
          </Combo>
          <Combo $w={124} $m="0 0 0 6px">
            <LineSample $w={36} />
            <Lat>ByLayer</Lat>
            <ComboArrow />
          </Combo>
          <Combo $w={123} $m="0 0 0 6px" $pl={10}>
            <span>随颜色</span>
            <ComboArrow />
          </Combo>
        </Strip>
        <Strip $pad="0 2px 0 0">
          <Grip $m="0 1px 0 2px" />
          <Tools items={['ucs', 8, 'ucsWorld', 'ucsPrev', 4, 'ucsFace', 'ucsObj', 'ucsView', 4, 'ucsOrigin', 'ucsZ', 'ucs3', 6, 'ucsRx', 'ucsRy', 'ucsRz', 5, 'ucsNamed']} />
        </Strip>
      </ToolRow>
      <Work>
        <CanvasCol>
          <Canvas>
            <svg width="110" height="108" viewBox="0 0 110 108" style={{ display: 'block' }}>
              <g stroke="#fff" strokeWidth="1.200" fill="none">
                <path d="M10 92V41M16 98h53" />
                <path d="M4 92h12v12H4zM10 92v12M4 98h12" />
                <path d="M5 41l5-14 5 14z" />
                <path d="M68 91l16 7-16 7z" />
              </g>
              <text x="6" y="16" fontSize="17" fontFamily="Liberation Sans" fill="#fff">Y</text>
              <text x="92" y="104" fontSize="17" fontFamily="Liberation Sans" fill="#fff">X</text>
            </svg>
          </Canvas>
          <Tabs>
            <TabNav>
              <TabNavBtn>|◂</TabNavBtn>
              <TabNavBtn>◂</TabNavBtn>
              <TabNavBtn>▸</TabNavBtn>
              <TabNavBtn>▸|</TabNavBtn>
            </TabNav>
            <Tab $on $w={44}><TabLabel $on>模型</TabLabel></Tab>
            <Tab $w={44}><TabLabel>布局1</TabLabel></Tab>
            <Tab $w={44}><TabLabel>布局2</TabLabel></Tab>
          </Tabs>
        </CanvasCol>
        <SideBar>
          <SideGrip />
          {sideTools.map((it, i) =>
            typeof it === 'number' ? (
              it > 10 ? <SideGrip key={i} $m="11px 0 6px" /> : <SideSep key={i} $h={it} />
            ) : (
              <SideBtn key={i}><Ico n={it} size={19} /></SideBtn>
            )
          )}
        </SideBar>
      </Work>
      <Command>
        <CmdGrip />
        <CmdWin>
          <CmdHist>
            <CmdLines>
              {history.map((line, i) => (
                <CmdLine key={i}><Mixed text={line} size={13.33} /></CmdLine>
              ))}
            </CmdLines>
            <VScroll>
              <ScrollBtn><Chev d="up" /></ScrollBtn>
              <ScrollBtn $m="45px 0 0">≡</ScrollBtn>
              <ScrollBtn><Chev d="down" /></ScrollBtn>
            </VScroll>
          </CmdHist>
          <CmdInput>
            <span><Mixed text="命令: la" size={13.33} /></span>
            <HScroll>
              <ScrollBtn $w={13} $h={18}><Chev d="left" /></ScrollBtn>
              <ScrollBtn $w={13} $h={18} $m="0 0 0 2px">|||</ScrollBtn>
              <ScrollBtn $w={13} $h={18} $m="0 0 0 21px"><Chev d="right" /></ScrollBtn>
            </HScroll>
          </CmdInput>
        </CmdWin>
      </Command>
      <Status>
        <ScaleText>比例<Lat> 1:100 </Lat><SmallArrow>▼</SmallArrow></ScaleText>
        <Coords><Lat>63309, 10768, 0</Lat></Coords>
        <StatusBtn $w={28}>捕捉</StatusBtn>
        <StatusBtn $w={28}>栅格</StatusBtn>
        <StatusBtn $w={28} $mr={5}>正交</StatusBtn>
        <StatusBtn $w={28} $mr={3}>极轴</StatusBtn>
        <StatusBtn $w={52} $on $mr={4}>对象捕捉</StatusBtn>
        <StatusBtn $w={52} $on $mr={3}>对象追踪</StatusBtn>
        <StatusBtn $w={28} $on $mr={5}><Lat>DUCS</Lat></StatusBtn>
        <StatusBtn $w={20} $mr={5}><Lat>DYN</Lat></StatusBtn>
        <StatusBtn $w={28}>线宽</StatusBtn>
        <StatusRight>
          <StatusText $mr={10}>注释比例<Lat>: 1:1 </Lat><SmallArrow>▼</SmallArrow></StatusText>
          <Ico n="annotA" size={17} />
          <Spacer $w={6} />
          <Ico n="annotB" size={17} />
          <Spacer $w={14} />
          <StatusBtn $w={28} $mr={3}>编组</StatusBtn>
          <StatusBtn $w={28} $mr={4}>基线</StatusBtn>
          <StatusBtn $w={28} $mr={4}>填充</StatusBtn>
          <StatusBtn $w={28} $mr={3}>加粗</StatusBtn>
          <StatusBtn $w={49} $mr={1}>动态标注</StatusBtn>
          <Ico n="lockOpen" size={20} />
          <Spacer $w={4} />
          <Ico n="dropDark" size={12} />
          <Spacer $w={8} />
          <Swatch $s={17} $c="#d4e4f7" />
          <Spacer $w={3} />
        </StatusRight>
      </Status>
      <Task>
        <Start>
          <svg width="18" height="18" viewBox="0 0 16 16" style={{ flex: 'none' }}>
            <path d="M1 3l6-1v5.500H1z" fill="#e8553a" />
            <path d="M8 2l7-1v6.500H8z" fill="#6fbf4a" />
            <path d="M1 8.500h6V14l-6-1z" fill="#4a8ae8" />
            <path d="M8 8.500h7V15l-7-1z" fill="#f2c62e" />
          </svg>
          开始
        </Start>
        <Quick>
          <Ico n="ieE" />
          <Ico n="desktop" />
          <Ico n="device" />
          <Chevrons>»</Chevrons>
        </Quick>
        <TaskBtns>
          {tasks.map(([ic, t, tone], i) => (
            <TaskBtn key={i} $tone={tone}>
              <Ico n={ic} size={ic === 'apex' ? 16 : 17} />
              <span><Mixed text={t} size={10} /></span>
            </TaskBtn>
          ))}
        </TaskBtns>
        <TrayKey><Ico n="keyboard" /></TrayKey>
        <Tray>
          <TrayBack>‹</TrayBack>
          <Ico n="tux" />
          <Ico n="net" size={15} />
          <Ico n="duck" />
          <Clock>15:57</Clock>
        </Tray>
      </Task>

      <Dialog>
        <DlgTitle>
          <Ico n="apex" />
          图层特性管理器
          <DlgBtns>
            <DlgBtn>?</DlgBtn>
            <DlgBtn $red>✕</DlgBtn>
          </DlgBtns>
        </DlgTitle>
        <DlgBody>
          <DlgTop>
            <DlgTool><Ico n="layerFilter" size={19} /></DlgTool>
            <DlgTool><Ico n="layerHand" size={19} /></DlgTool>
            <DlgTool $ml={9}><Ico n="layerDoc" size={18} /></DlgTool>
            <DlgTool $ml={122}><Ico n="layerNew" size={19} /></DlgTool>
            <DlgTool $w={24}><Ico n="layerNew2" size={19} /></DlgTool>
            <DlgTool $w={23}><Ico n="del" size={17} /></DlgTool>
            <DlgTool $w={24}><Ico n="ok" size={15} /></DlgTool>
            <InfoBar $grow $h={25} $m="0 0 0 37px" $pl={1}><span><Mixed text="当前图层: 0" /></span></InfoBar>
          </DlgTop>
          <DlgMain>
            <LeftCol>
              <Tree>
                <TreeRow>
                  <Expander />
                  <Ico n="layers" size={18} />
                  <TreeLabel $sel>全部</TreeLabel>
                </TreeRow>
                <TreeRow $ml={14} $gap={0}>
                  <TreeDots />
                  <Ico n="layerFilter" size={18} />
                  <TreeLabel $ml={3}>所有使用的图层</TreeLabel>
                </TreeRow>
              </Tree>
              <SearchBox>搜索图层</SearchBox>
            </LeftCol>
            <Table>
              <HeadRow>
                {heads.map((h, i) => (
                  <HeadCell key={i}>
                    <span><Mixed text={h} /></span>
                    {i === 1 && <SortMark />}
                  </HeadCell>
                ))}
              </HeadRow>
              {layerRows.map((r) => (
                <Row key={r.name} $sel={r.sel}>
                  <Cell $center><Ico n={r.st} size={r.st === 'ok' ? 16 : 17} /></Cell>
                  <Cell $pl={4}><Lat>{r.name}</Lat></Cell>
                  <Cell $center><Ico n="bulb" size={15} /></Cell>
                  <Cell $center><Ico n="sun" size={16} /></Cell>
                  <Cell $center><Ico n={r.lock} size={16} /></Cell>
                  <Cell $pl={4} $gap={6}><Swatch $c={r.c} $s={11} />{r.cn}</Cell>
                  <Cell $pl={5} $c={r.sel ? '#d8e4f6' : '#222'}><Lat>Contin...</Lat></Cell>
                  <Cell $pl={3} $gap={6}><LineSample $w={22} $c={r.sel ? '#fff' : '#111'} />默认</Cell>
                  <Cell $pl={3} $c={r.sel ? '#a9c0e4' : '#9a9a9a'}><Lat>{r.pl}</Lat></Cell>
                  <Cell $center $box={r.sel}><Ico n={r.pr} size={16} /></Cell>
                  <Cell $center><Ico n="vpFreeze" size={15} /></Cell>
                  <Cell />
                  <Cell />
                </Row>
              ))}
            </Table>
          </DlgMain>
          <InfoBar $h={23} $m="8px 0 0" $pl={1}>
            <span><Mixed text="全部: 显示了 6 个图层，共 6 个图层" /></span>
          </InfoBar>
          <Checks>
            <CheckLabel $w={149}><CheckBox /><span><Mixed text="反转过滤器 (I)" /></span></CheckLabel>
            <CheckLabel $w={300}><CheckBox /><span><Mixed text="指示正在使用的图层 (U)" /></span></CheckLabel>
          </Checks>
          <Actions>
            <Btn $w={101}>设置 <Lat>(E)...</Lat></Btn>
            <Btn $ml={576} $def>确定</Btn>
            <Btn>取消</Btn>
            <Btn>应用 <Lat>(A)</Lat></Btn>
            <Btn>帮助 <Lat>(H)</Lat></Btn>
          </Actions>
        </DlgBody>
      </Dialog>
    </Page>
  );
}
